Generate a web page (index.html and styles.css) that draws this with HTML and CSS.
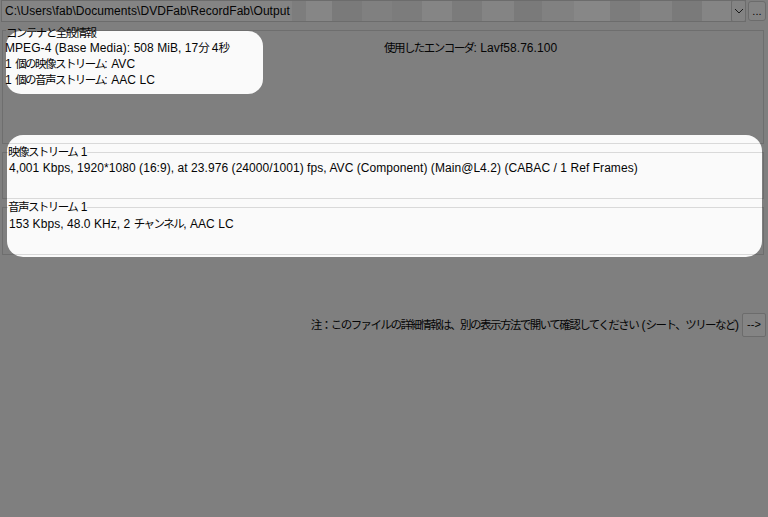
FILE: index.html
```html
<!DOCTYPE html>
<html lang="ja">
<head>
<meta charset="utf-8">
<title>MediaInfo</title>
<link rel="stylesheet" href="styles.css">
</head>
<body>
<div class="spot spot-general"></div>
<div class="spot spot-streams"></div>
<div class="app">
  <div class="topbar">
    <div class="combo">
      <div class="combo-text">C:\Users\fab\Documents\DVDFab\RecordFab\Output</div>
      <div class="mosaic"></div>
      <div class="combo-btn">
        <svg width="10" height="6" viewBox="0 0 10 6"><path d="M1 1 L5 5 L9 1" fill="none" stroke="#1a1a1a" stroke-width="1"/></svg>
      </div>
    </div>
    <div class="btn-more">...</div>
  </div>

  <div class="groups">
    <fieldset class="group group-general">
      <legend><span class="jp">コンテナと全般情報</span></legend>
      <div class="general-grid">
        <div class="general-left">
          <div class="line">MPEG-4 (Base Media): 508 MiB, 17<span class="jp">分</span> 4<span class="jp">秒</span></div>
          <div class="line">1 <span class="jp">個の映像ストリーム</span>: AVC</div>
          <div class="line">1 <span class="jp">個の音声ストリーム</span>: AAC LC</div>
        </div>
        <div class="general-right">
          <div class="line"><span class="jp">使用したエンコーダ</span>: Lavf58.76.100</div>
        </div>
      </div>
    </fieldset>

    <fieldset class="group group-video">
      <legend><span class="jp">映像ストリーム</span> 1</legend>
      <div class="stream-body">
        <div class="line">4,001 Kbps, 1920*1080 (16:9), at 23.976 (24000/1001) fps, AVC (Component) (Main@L4.2) (CABAC / 1 Ref Frames)</div>
      </div>
    </fieldset>

    <fieldset class="group group-audio">
      <legend><span class="jp">音声ストリーム</span> 1</legend>
      <div class="stream-body">
        <div class="line">153 Kbps, 48.0 KHz, 2 <span class="jp">チャンネル</span>, AAC LC</div>
      </div>
    </fieldset>
  </div>

  <div class="note-row">
    <div class="note"><span class="jp">注：このファイルの詳細情報は、別の表示方法で開いて確認してください</span> (<span class="jp">シート、ツリーなど</span>)</div>
    <div class="btn-next">--&gt;</div>
  </div>
</div>
</body>
</html>
```

FILE: styles.css
```css
html, body {
  margin: 0;
  padding: 0;
}

body {
  width: 768px;
  height: 517px;
  overflow: hidden;
  background: #7f7f7f;
  color: #050505;
  font-family: "Liberation Sans", "Noto Sans CJK JP", sans-serif;
  font-size: 12px;
  line-height: 16px;
  letter-spacing: 0.06px;
}

.jp {
  font-family: "Noto Sans CJK JP", sans-serif;
  font-size: 11.5px;
  letter-spacing: -1.55px;
  line-height: 1;
}

/* spotlight highlights */
.spot {
  position: absolute;
  z-index: 0;
  background: #fafafa;
}

.spot-general {
  left: 6px;
  top: 31px;
  width: 257px;
  height: 63px;
  border-radius: 15px;
}

.spot-streams {
  left: 7px;
  top: 135px;
  width: 755px;
  height: 122px;
  border-radius: 16px;
}

.app {
  position: relative;
  z-index: 1;
}

/* top bar */
.topbar {
  display: flex;
  align-items: flex-start;
  gap: 2px;
  height: 22px;
}

.combo {
  display: flex;
  margin-left: 1px;
  width: 745px;
  height: 22px;
  box-sizing: border-box;
  border: 1px solid #6c6c6c;
  border-right: none;
  background: #848484;
}

.combo-text {
  padding-left: 3px;
  line-height: 20px;
  white-space: nowrap;
  width: 287px;
  flex: none;
}

.mosaic {
  flex: 1;
  height: 20px;
  background: linear-gradient(90deg,
    #7d7d7d 0 14px, #868686 14px 40px, #7a7a7a 40px 70px, #808080 70px 100px,
    #7c7c7c 100px 130px, #858585 130px 160px, #7b7b7b 160px 190px, #848484 190px 222px,
    #7a7a7a 222px 250px, #818181 250px 282px, #878787 282px 318px, #7c7c7c 318px 348px,
    #838383 348px 380px, #7a7a7a 380px 410px, #858585 410px 440px);
}

.combo-btn {
  width: 15px;
  height: 22px;
  margin-top: -1px;
  box-sizing: border-box;
  border: 1px solid #6c6c6c;
  border-radius: 2px;
  background: #838383;
  display: flex;
  align-items: center;
  justify-content: center;
  flex: none;
}

.btn-more {
  width: 18px;
  height: 20px;
  margin-top: 1px;
  box-sizing: border-box;
  border: 1px solid #6c6c6c;
  border-radius: 3px;
  background: #848484;
  text-align: center;
  line-height: 18px;
  font-size: 11px;
}

/* group boxes */
.groups {
  padding: 0 4px 0 2px;
}

.group {
  margin: 0;
  padding: 0 0 0 2px;
  min-width: 0;
  border: 1px solid rgba(0, 0, 0, 0.13);
}

.group legend {
  padding: 0;
  line-height: 14px;
  white-space: nowrap;
}

.group-general {
  margin-top: -2px;
}

.group-general legend {
  padding-top: 6px;
  margin-left: 1px;
}

.general-grid {
  display: grid;
  grid-template-columns: 379px 1fr;
  align-items: start;
  margin-top: 0;
  height: 103px;
}

.line {
  white-space: nowrap;
  line-height: 16px;
  height: 16px;
}

.group-video,
.group-audio {
  margin-top: 1px;
}

.group-video legend,
.group-audio legend {
  margin-left: 3px;
}

.stream-body {
  padding: 1px 0 0 4px;
  height: 39px;
  box-sizing: border-box;
}

.group-audio .stream-body {
  padding-top: 2px;
  height: 40px;
}

/* note row */
.note-row {
  display: flex;
  justify-content: flex-end;
  align-items: center;
  margin-top: 58px;
  padding-right: 2px;
  gap: 3px;
}

.note {
  white-space: nowrap;
}

.btn-next {
  width: 24px;
  height: 24px;
  box-sizing: border-box;
  border: 1px solid #6c6c6c;
  border-radius: 2px;
  background: #848484;
  text-align: center;
  line-height: 21px;
  font-size: 11px;
}
```
